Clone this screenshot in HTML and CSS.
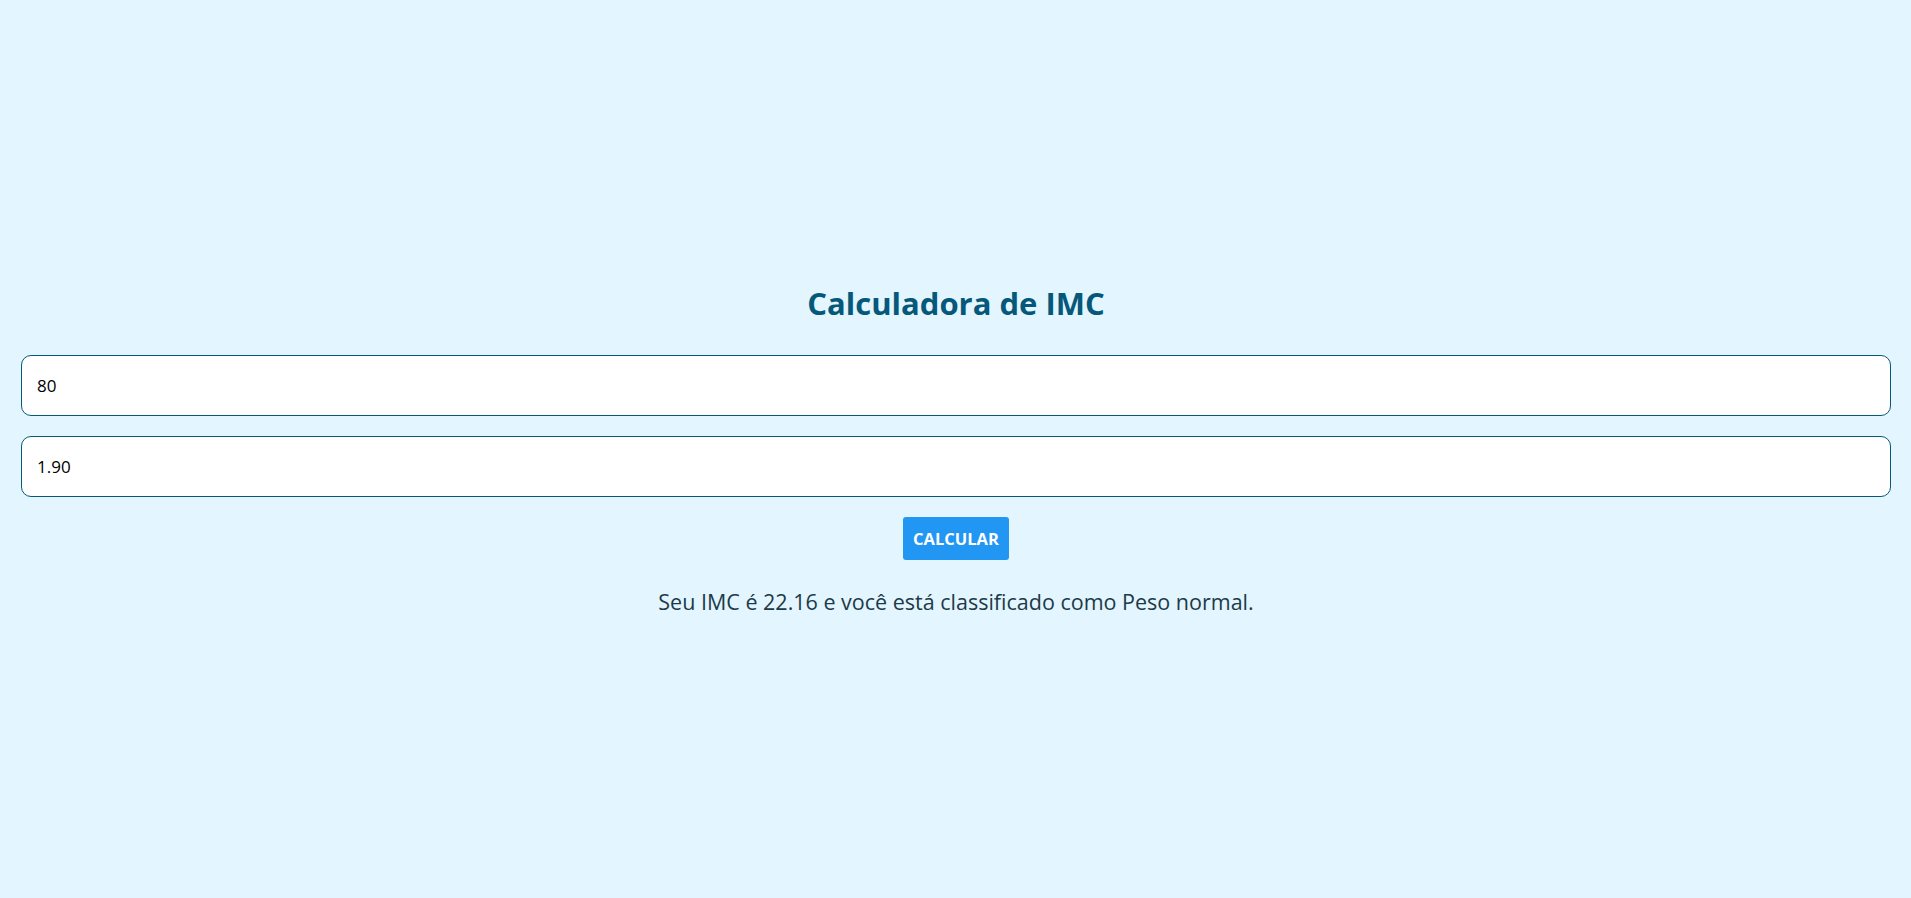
FILE: index.html
```html
<!DOCTYPE html>
<html lang="pt-BR">
<head>
<meta charset="utf-8">
<title>Calculadora de IMC</title>
<link rel="stylesheet" href="styles.css">
</head>
<body>
<main class="app">
  <h1 class="title">Calculadora de IMC</h1>
  <input class="field" type="text" value="80">
  <input class="field" type="text" value="1.90">
  <button class="btn">CALCULAR</button>
  <p class="result">Seu IMC é 22.16 e você está classificado como Peso normal.</p>
</main>
</body>
</html>
```
FILE: styles.css
```css
html, body {
  margin: 0;
  padding: 0;
}
body {
  background: #e3f5fe;
  font-family: "Segoe UI", "Open Sans", "Noto Sans", sans-serif;
  min-height: 100vh;
  display: flex;
  align-items: center;
  justify-content: center;
}
.app {
  width: 100%;
  box-sizing: border-box;
  padding: 0 20px 0 21px;
  display: flex;
  flex-direction: column;
  align-items: center;
}
.title {
  color: #05587a;
  font-size: 31px;
  font-weight: 700;
  margin: 0 0 31px;
}
.field {
  width: 100%;
  box-sizing: border-box;
  height: 61px;
  border: 1px solid #05587a;
  border-radius: 10px;
  background: #fff;
  padding: 0 15px;
  font-family: inherit;
  font-size: 17px;
  color: #000;
  margin-bottom: 20px;
  outline: none;
}
.btn {
  width: 106px;
  height: 43px;
  background: #2196f3;
  color: #fff;
  border: none;
  border-radius: 3px;
  font-family: inherit;
  font-size: 16.5px;
  font-weight: 700;
  padding: 0;
}
.result {
  color: #1c3a48;
  font-size: 21.5px;
  margin: 27px 0 0;
}
```
